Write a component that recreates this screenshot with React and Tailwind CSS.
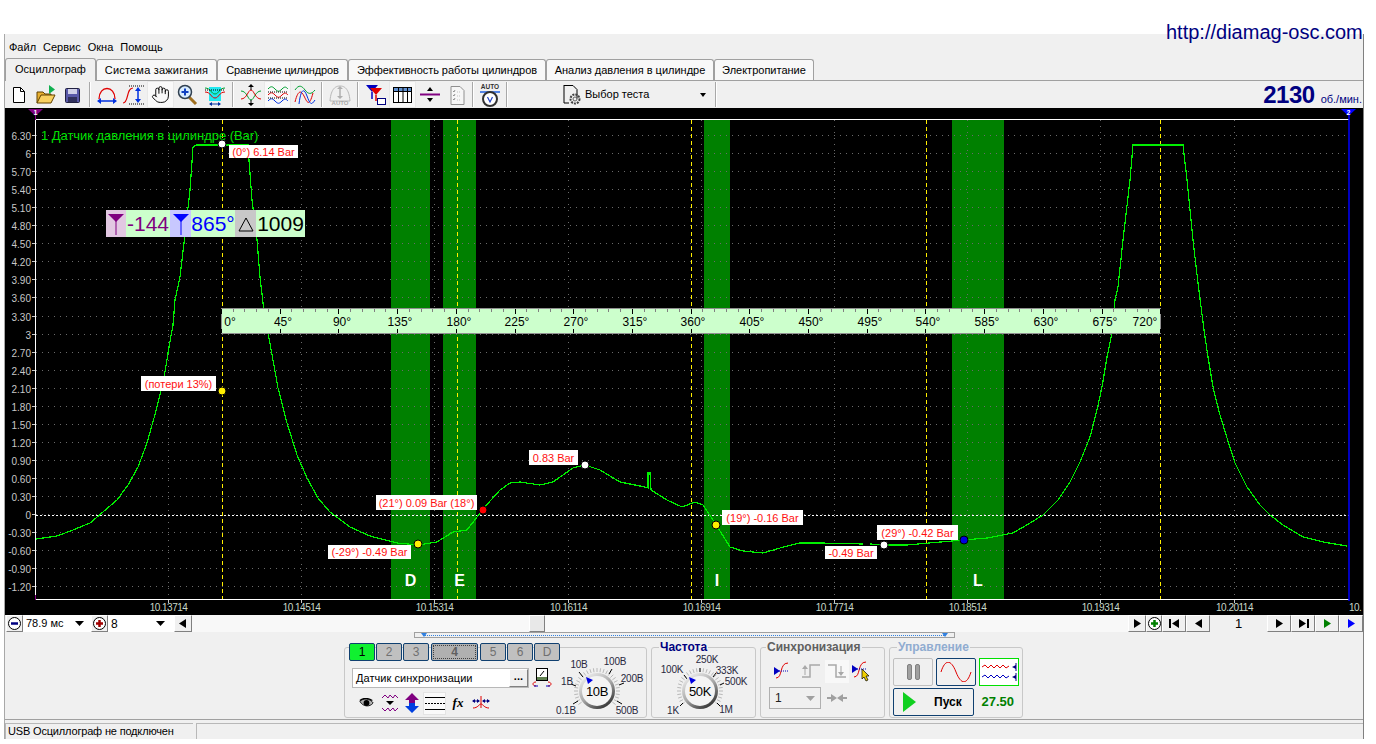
import { Hand } from 'lucide-react';

const TABS = [
  { label: 'Система зажигания', w: 'w-[121px] tracking-[0.2px]' },
  { label: 'Сравнение цилиндров', w: 'w-[131px] tracking-[-0.15px]' },
  { label: 'Эффективность работы цилиндров', w: 'w-[198px] tracking-[-0.05px]' },
  { label: 'Анализ давления в цилиндре', w: 'w-[168px]' },
  { label: 'Электропитание', w: 'w-[100px]' },
];

const Y_LABELS = ['6.30', '6', '5.70', '5.40', '5.10', '4.80', '4.50', '4.20', '3.90', '3.60', '3.30', '3', '2.70', '2.40', '2.10', '1.80', '1.50', '1.20', '0.90', '0.60', '0.30', '0', '-0.30', '-0.60', '-0.90', '-1.20'];
const TIMES = ['10.13714', '10.14514', '10.15314', '10.16114', '10.16914', '10.17714', '10.18514', '10.19314', '10.20114'];
const CURSORS = [222, 457, 691, 926, 1160];
const BANDS = [
  { x: 391, w: 39, letter: 'D' },
  { x: 443, w: 33, letter: 'E' },
  { x: 704, w: 26, letter: 'I' },
  { x: 952, w: 52, letter: 'L' },
];
const RULER = [[0, 230], [45, 283], [90, 342], [135, 400], [180, 459], [225, 517], [270, 576], [315, 635], [360, 693], [405, 752], [450, 811], [495, 870], [540, 928], [585, 987], [630, 1046], [675, 1105], [720, 1145]];
const NOTES = [
  { x: 229, y: 145, w: 69, h: 13, text: '(0°) 6.14 Bar' },
  { x: 141, y: 376, w: 75, h: 15, text: '(потери 13%)' },
  { x: 529, y: 450, w: 49, h: 15, text: '0.83 Bar' },
  { x: 376, y: 495, w: 101, h: 15, text: '(21°) 0.09 Bar (18°)' },
  { x: 328, y: 545, w: 83, h: 14, text: '(-29°) -0.49 Bar' },
  { x: 722, y: 510, w: 81, h: 15, text: '(19°) -0.16 Bar' },
  { x: 825, y: 546, w: 52, h: 13, text: '-0.49 Bar' },
  { x: 877, y: 525, w: 81, h: 15, text: '(29°) -0.42 Bar' },
];
const DOTS = [[222, 144, '#fff'], [222, 391, '#ffee00'], [418, 544, '#ffee00'], [483, 510, '#ff0000'], [585, 465, '#fff'], [716, 525, '#ffee00'], [884, 545, '#fff'], [964, 540, '#0000e0']];

const CURVE_A = '36,539 57,536 73,530 90,523 103,512 117,500 128,485 138,467 147,443 154,418 160,395 165,372 169,347 173,325 175,300 180,277 184,243 190,190 193,147 196,145 248,145 249,160 252,200 257,240 260,277 265,320 268,333 273,360 278,388 287,423 297,455 307,478 318,498 330,512 350,527 370,536 397,543 418,545 437,542 453,532 467,530 477,517 483,509 500,490 510,483 520,482 540,485 553,482 573,468 585,465 600,470 620,482 645,487 648,488 648,473 650,473 651,490 667,500 682,507 695,502 703,505 715,523 730,547 743,551 763,553 780,548 800,543 820,543 863,544';
const CURVE_B = '870,544 884,545 907,545 963,540 987,538 1013,533 1030,523 1043,515 1058,500 1070,482 1080,462 1090,437 1097,410 1102,387 1107,357 1112,333 1115,300 1118,287 1123,240 1130,180 1133,145 1183,145 1187,180 1193,240 1198,283 1204,330 1208,357 1213,387 1220,415 1227,438 1235,463 1247,487 1260,505 1270,515 1283,525 1303,537 1323,542 1347,546';

const bevel = 'border border-t-white border-l-white border-r-[#808080] border-b-[#808080]';

function NewIcon() {
  return (
    <svg width="24" height="22" viewBox="0 0 24 22">
      <path d="M6.500 3.500h7l4 4v11H6.500z" fill="#fff" stroke="#000" />
      <path d="M13.500 3.500v4h4" fill="none" stroke="#000" />
    </svg>
  );
}

function OpenIcon() {
  return (
    <svg width="24" height="22" viewBox="0 0 24 22">
      <path d="M3 19V8h6l2 2h6v2" fill="#e8b030" stroke="#604000" />
      <path d="M3 19l4-8h14l-4 8z" fill="#f8d060" stroke="#604000" />
      <path d="M15 1l6 4.500-6 4.500z" fill="#10b050" />
    </svg>
  );
}

function SaveIcon() {
  return (
    <svg width="24" height="22" viewBox="0 0 24 22">
      <rect x="4.500" y="4.500" width="14" height="14" rx="1" fill="#5858a8" stroke="#202040" />
      <rect x="7" y="5" width="9" height="5" fill="#d0d0e8" />
      <rect x="7" y="13" width="9" height="5" fill="#30305c" />
    </svg>
  );
}

function WidthIcon() {
  return (
    <svg width="24" height="22" viewBox="0 0 24 22" fill="none">
      <path d="M4 15C4 1 20 1 20 15" stroke="#e00000" strokeWidth="1.300" />
      <path d="M4 17h15" stroke="#0030e0" strokeWidth="1.500" />
      <path d="M2 17l4-3v6zM22 17l-4-3v6z" fill="#0030e0" />
    </svg>
  );
}

function HeightIcon() {
  return (
    <svg width="24" height="22" viewBox="0 0 24 22" fill="none">
      <path d="M1 19c6 0 3-15 10-15" stroke="#e00000" strokeWidth="1.200" />
      <path d="M7 2h15M7 20h15" stroke="#000" strokeDasharray="1 1" />
      <path d="M16 5v12" stroke="#0030e0" strokeWidth="1.500" />
      <path d="M16 3l-3 4h6zM16 19l-3-4h6z" fill="#0030e0" />
    </svg>
  );
}

function ZoomIcon() {
  return (
    <svg width="24" height="22" viewBox="0 0 24 22" fill="none">
      <path d="M13 13l7 7" stroke="#a07020" strokeWidth="3" />
      <circle cx="9" cy="8" r="6.500" fill="#d8ecff" stroke="#304050" strokeWidth="1.500" />
      <path d="M5.500 8h7M9 4.500v7" stroke="#1040c0" strokeWidth="2" />
    </svg>
  );
}

function SpanIcon() {
  return (
    <svg width="24" height="22" viewBox="0 0 24 22" fill="none">
      <path d="M6 3h12v14H6z" fill="#20e8f0" />
      <path d="M2 4c6 0 6 6 10 6s4-6 10-6" stroke="#00a030" />
      <path d="M2 8c6 0 6 6 10 6s4-6 10-6" stroke="#e00000" />
      <path d="M2 6h20" stroke="#000" strokeDasharray="1 1" />
      <path d="M7 20h10" stroke="#0030a0" />
      <path d="M6 20l3-2v4zM18 20l-3-2v4z" fill="#0030a0" />
    </svg>
  );
}

function CrossIcon() {
  return (
    <svg width="24" height="22" viewBox="0 0 24 22" fill="none">
      <path d="M2 7c6 0 7 9 10 9s4-9 10-9" stroke="#00a030" />
      <path d="M2 15c6 0 7-9 10-9s4 9 10 9" stroke="#e00000" />
      <path d="M12 0l-3 3h6zM12 22l-3-3h6z" fill="#000" />
      <path d="M12 3v3M12 16v3" stroke="#000" />
    </svg>
  );
}

function WavesIcon() {
  return (
    <svg width="24" height="22" viewBox="0 0 24 22" fill="none">
      <path d="M2 5c3-3 4-3 7 0s4 3 7 0 4-2 6 0" stroke="#00a030" />
      <path d="M2 11c3-3 4-3 7 0s4 3 7 0 4-2 6 0" stroke="#e00000" />
      <path d="M2 17c3-3 4-3 7 0s4 3 7 0 4-2 6 0" stroke="#0030e0" />
      <path d="M2 8h20M2 14h20" stroke="#000" strokeDasharray="1 1" />
    </svg>
  );
}

function OverlapIcon() {
  return (
    <svg width="24" height="22" viewBox="0 0 24 22" fill="none">
      <path d="M2 6c4-6 7-4 10 0s6 5 10 0" stroke="#00a030" />
      <path d="M2 18C5 6 8 6 11 12s5 12 9-3" stroke="#e00000" />
      <path d="M6 20C8 4 11 4 14 12s4 10 8 4" stroke="#0030e0" />
    </svg>
  );
}

function AutoOffIcon() {
  return (
    <svg width="24" height="22" viewBox="0 0 24 22" fill="none">
      <path d="M2 17C3 4 8 2 12 2s9 2 10 15z" stroke="#b8b8b8" />
      <path d="M12 4v9" stroke="#b0b0b0" strokeWidth="1.500" />
      <path d="M12 2l-3 3h6zM12 15l-3-3h6z" fill="#b0b0b0" />
      <text x="12" y="21" textAnchor="middle" fontSize="6" fontWeight="700" fill="#a8a8a8">AUTO</text>
    </svg>
  );
}

function FilterIcon() {
  return (
    <svg width="24" height="22" viewBox="0 0 24 22">
      <path d="M2 1h12L8 8z" fill="#0000c0" />
      <path d="M8 8v7" stroke="#0000c0" strokeWidth="1.500" />
      <path d="M6 4h12l-6 7z" fill="#e00000" />
      <path d="M12 11v6" stroke="#e00000" strokeWidth="1.500" />
      <rect x="13.500" y="14.500" width="8" height="6" fill="#fff" stroke="#000080" />
    </svg>
  );
}

function TableIcon() {
  return (
    <svg width="24" height="22" viewBox="0 0 24 22" fill="none">
      <rect x="2.500" y="3.500" width="18" height="15" stroke="#000" fill="#fff" />
      <rect x="2.500" y="3.500" width="18" height="4" fill="#6090d0" stroke="#000" />
      <path d="M7.500 4v14M12 4v14M16.500 4v14" stroke="#000" />
    </svg>
  );
}

function DividerIcon() {
  return (
    <svg width="24" height="22" viewBox="0 0 24 22">
      <path d="M2 10.500h20" stroke="#800080" strokeWidth="2" />
      <path d="M12 3l-3 4h6zM12 18l-3-4h6z" fill="#000" />
    </svg>
  );
}

function ChecklistIcon() {
  return (
    <svg width="24" height="22" viewBox="0 0 24 22" fill="none">
      <path d="M6 2.500h9l4 4v14H6z" fill="#f6f6f6" stroke="#909090" />
      <path d="M8 7l1 1 1-2M8 11l1 1 1-2M8 15l1 1 1-2" stroke="#909090" />
      <path d="M12 8h4M12 12h4M12 16h4" stroke="#c0c0c0" strokeDasharray="1 1" />
    </svg>
  );
}

function GaugeIcon() {
  return (
    <svg width="24" height="24" viewBox="0 0 24 24" fill="none">
      <text x="12" y="6" textAnchor="middle" fontSize="6.500" fontWeight="700" fill="#303030">AUTO</text>
      <path d="M2 9h20" stroke="#2060e0" strokeWidth="1.500" />
      <circle cx="12" cy="16" r="7" fill="#fff" stroke="#303030" strokeWidth="2" />
      <path d="M9.500 14l2.500 5 2.500-5" stroke="#2040c0" strokeWidth="1.200" />
    </svg>
  );
}

function Tool({ children, pressed }) {
  return (
    <div className={`w-[27px] h-[27px] flex items-center justify-center ${pressed ? 'bg-[#f9f9f9] border border-[#e8e8e8]' : ''}`}>
      {children}
    </div>
  );
}

function Sep({ className }) {
  return (
    <div className={`h-[25px] flex justify-center ${className}`}>
      <div className="w-[2px] h-full border-l border-l-[#a8a8a8] border-r border-r-white" />
    </div>
  );
}

function Chart() {
  return (
    <div className="relative h-[507px] bg-black overflow-hidden">
      <svg width="1358" height="507" viewBox="5 108 1358 507" className="block">
        {BANDS.map((b) => (
          <rect key={b.letter} x={b.x} y="120" width={b.w} height="479" fill="#008000" />
        ))}

        {Y_LABELS.map((lbl, i) => {
          const y = Math.round(135 + i * 18.05) + 0.5;
          return (
            <g key={lbl}>
              <line x1="36" x2="1349" y1={y} y2={y} stroke="#6a6a6a" strokeDasharray="1 5" />
              <line x1="32" x2="35" y1={y} y2={y} stroke="#c8c8c8" />
              <text x="31" y={y + 4} textAnchor="end" fontSize="10" fill="#c8c8c8">{lbl}</text>
            </g>
          );
        })}

        {TIMES.map((t, i) => {
          const x = Math.round(168 + i * 133.2) + 0.5;
          return (
            <g key={t}>
              <line x1={x} x2={x} y1="120" y2="599" stroke="#6a6a6a" strokeDasharray="1 5" />
              <line x1={x} x2={x} y1="599" y2="603" stroke="#c8c8c8" />
              <text x={x} y="611" textAnchor="middle" fontSize="10" letterSpacing="-0.500" fill="#c8d8c8">{t}</text>
            </g>
          );
        })}
        <text x="1349" y="611" fontSize="10" letterSpacing="-0.500" fill="#c8d8c8">10.</text>

        {CURSORS.map((x) => (
          <line key={x} x1={x + 0.5} x2={x + 0.5} y1="120" y2="599" stroke="#ffee00" strokeDasharray="4 3" />
        ))}
        <line x1="36" x2="1349" y1="515.500" y2="515.500" stroke="#fff" strokeDasharray="2 2" />

        <polyline points={CURVE_A} fill="none" stroke="#00f000" strokeWidth="1.200" shapeRendering="crispEdges" />
        <polyline points={CURVE_B} fill="none" stroke="#00f000" strokeWidth="1.200" shapeRendering="crispEdges" />

        <path d="M35.500 119V599.500H1349" fill="none" stroke="#fff" />
        <path d="M35 119.500H1349" stroke="#fff" />
        <line x1="35.500" x2="35.500" y1="114" y2="120" stroke="#800080" />
        <line x1="35.500" x2="35.500" y1="595" y2="600" stroke="#800080" />
        <line x1="1349" x2="1349" y1="114" y2="601" stroke="#0000ff" strokeWidth="1.500" />
        <path d="M28 109h15l-7.500 7z" fill="#800080" />
        <text x="35.500" y="115" textAnchor="middle" fontSize="7" fontWeight="700" fill="#fff">1</text>
        <path d="M1341 109h15l-7.500 7z" fill="#0000ff" />
        <text x="1348.500" y="115" textAnchor="middle" fontSize="7" fontWeight="700" fill="#fff">2</text>

        <text x="41" y="140" fontSize="13" letterSpacing="-0.050" fill="#00e000">1 Датчик давления в цилиндре (Bar)</text>

        {BANDS.map((b) => (
          <text key={b.letter} x={b.x + b.w / 2} y="586" textAnchor="middle" fontSize="16" fontWeight="700" fill="#fff">{b.letter}</text>
        ))}

        <rect x="221.500" y="308.500" width="939" height="25" fill="#ccffcc" stroke="#909090" />
        {Array.from({ length: 81 }, (_, i) => {
          const x = Math.round(221 + i * 11.74) + 0.5;
          const major = i % 5 === 0;
          return (
            <g key={i}>
              <line x1={x} x2={x} y1="309" y2={major ? 314 : 312} stroke={major ? '#000' : '#808080'} />
              {major && <line x1={x} x2={x} y1="329" y2="333" stroke="#000" />}
            </g>
          );
        })}
        {RULER.map(([deg, x]) => (
          <text key={deg} x={x} y="326" textAnchor="middle" fontSize="12" fill="#000">{deg}°</text>
        ))}

        {NOTES.map((n) => (
          <g key={n.text}>
            <rect x={n.x} y={n.y} width={n.w} height={n.h} fill="#fff" />
            <text x={n.x + n.w / 2} y={n.y + n.h / 2 + 4} textAnchor="middle" fontSize="11" fill="#ff1010">{n.text}</text>
          </g>
        ))}
        {DOTS.map(([x, y, c]) => (
          <circle key={`${x}-${y}`} cx={x} cy={y} r="4" fill={c} stroke="#000" />
        ))}
      </svg>

      {/* cursor readout */}
      <div className="absolute left-[101px] top-[102px] flex h-[27px] text-[21px] leading-[27px]">
        <div className="w-[20px] bg-[#e2c8e2] flex items-center justify-center">
          <svg width="16" height="23" viewBox="0 0 16 23"><path d="M0 2h16L8 10z" fill="#800080" /><path d="M8 8v15" stroke="#800080" /></svg>
        </div>
        <div className="w-[44px] bg-[#ccffcc] text-[#800080] text-center">-144</div>
        <div className="w-[21px] bg-[#c8c8ff] flex items-center justify-center">
          <svg width="16" height="23" viewBox="0 0 16 23"><path d="M0 2h16L8 10z" fill="#0000ff" /><path d="M8 8v15" stroke="#0000ff" /></svg>
        </div>
        <div className="w-[44px] bg-[#ccffcc] text-[#0000ff] text-center">865°</div>
        <div className="w-[21px] bg-[#c8c8c8] flex items-center justify-center">
          <svg width="16" height="16" viewBox="0 0 16 16"><path d="M8 2l7 13H1z" fill="none" stroke="#000" /></svg>
        </div>
        <div className="w-[49px] bg-[#ccffcc] text-black text-center">1009</div>
      </div>
    </div>
  );
}

function NavBtn({ children, className = 'w-[24px]' }) {
  return (
    <div className={`h-[17px] bg-[#f0f0f0] flex items-center justify-center ${bevel} ${className}`}>
      {children}
    </div>
  );
}

function Tri({ dir = 'r', color = '#000' }) {
  return (
    <svg width="9" height="9" viewBox="0 0 9 9">
      <path d={dir === 'r' ? 'M1 0l7 4.500-7 4.500z' : 'M8 0L1 4.500 8 9z'} fill={color} />
    </svg>
  );
}

function RoundBtn({ minus }) {
  const color = minus ? '#000080' : '#a00000';
  return (
    <div className={`w-[17px] h-[17px] flex items-center justify-center bg-[#f0f0f0] ${bevel}`}>
      <svg width="13" height="13" viewBox="0 0 13 13">
        <circle cx="6.500" cy="6.500" r="6" fill="#fff" stroke="#000" />
        <path d={minus ? 'M3 6.500h7' : 'M3 6.500h7M6.500 3v7'} stroke={color} strokeWidth="2.500" />
      </svg>
    </div>
  );
}

function DropArrow() {
  return (
    <svg width="9" height="5" viewBox="0 0 9 5"><path d="M0 0h9L4.500 5z" fill="#000" /></svg>
  );
}

function ScrollRow() {
  return (
    <div className="h-[17px] flex items-stretch pl-px text-[11px]">
      <RoundBtn minus />
      <div className="w-[68px] bg-white flex items-center justify-between pl-[3px] pr-[7px]">
        <span>78.9 мс</span>
        <DropArrow />
      </div>
      <RoundBtn />
      <div className="w-[66px] bg-white flex items-center justify-between pl-[3px] pr-[9px]">
        <span className="text-[12px]">8</span>
        <DropArrow />
      </div>
      <NavBtn className="w-[18px]"><Tri dir="l" /></NavBtn>
      <div className="w-[938px] bg-[#f8f8f8] relative">
        <div className={`absolute left-[337px] top-0 w-[16px] h-[17px] bg-[#e8e8e8] ${bevel}`} />
      </div>
      <NavBtn className="w-[18px]"><Tri /></NavBtn>
      <div className={`w-[16px] h-[17px] flex items-center justify-center bg-[#f0f0f0] ${bevel}`}>
        <svg width="13" height="13" viewBox="0 0 13 13">
          <circle cx="6.500" cy="6.500" r="6" fill="#fff" stroke="#000" />
          <path d="M3 6.500h7M6.500 3v7" stroke="#008000" strokeWidth="2.500" />
        </svg>
      </div>
      <NavBtn>
        <svg width="11" height="9" viewBox="0 0 11 9"><path d="M0 0h2v9H0zM10 0L3 4.500 10 9z" fill="#000" /></svg>
      </NavBtn>
      <NavBtn><Tri dir="l" /></NavBtn>
      <div className="w-[57px] bg-[#f0f0f0] text-center leading-[17px] text-[13px]">1</div>
      <NavBtn><Tri /></NavBtn>
      <NavBtn>
        <svg width="11" height="9" viewBox="0 0 11 9"><path d="M1 0l7 4.500L1 9zM9 0h2v9H9z" fill="#000" /></svg>
      </NavBtn>
      <NavBtn><Tri color="#008000" /></NavBtn>
      <NavBtn><Tri color="#0000ff" /></NavBtn>
    </div>
  );
}

function Dial({ value, cx, cy, labels, marks, pointer }) {
  return (
    <svg width="104" height="70" viewBox="0 0 104 70" className="block">
      <defs>
        <linearGradient id={`ring${value}`} x1="0.150" y1="0" x2="0.850" y2="1">
          <stop offset="0" stopColor="#f4f4f4" />
          <stop offset="0.500" stopColor="#a8a8a8" />
          <stop offset="1" stopColor="#202020" />
        </linearGradient>
      </defs>
      {Array.from({ length: 40 }, (_, i) => {
        const a = (i * 9 * Math.PI) / 180;
        if (Math.sin(a) < -0.7) return null;
        return (
          <line key={i} x1={cx + Math.cos(a) * 19} y1={cy - Math.sin(a) * 19} x2={cx + Math.cos(a) * 23} y2={cy - Math.sin(a) * 23} stroke="#b8b8b8" />
        );
      })}
      {marks.map(([x1, y1, x2, y2], i) => (
        <line key={i} x1={x1} y1={y1} x2={x2} y2={y2} stroke="#000" />
      ))}
      <circle cx={cx} cy={cy} r="18" fill={`url(#ring${value})`} />
      <circle cx={cx} cy={cy} r="15" fill="#f4f4f4" />
      <path d={pointer} fill="#0000e0" />
      <text x={cx} y={cy + 5} textAnchor="middle" fontSize="13" letterSpacing="-0.300" fill="#000">{value}</text>
      {labels.map(([t, x, y]) => (
        <text key={t} x={x} y={y} textAnchor="middle" fontSize="10" letterSpacing="-0.200" fill="#282840">{t}</text>
      ))}
    </svg>
  );
}

function ChannelBtn({ children, active, wide }) {
  return (
    <div className={`h-[18px] border border-[#104070] rounded-[2px] flex items-center justify-center text-[12px] ${wide ? 'w-[47px] bg-[#b0b0b0] font-bold text-[#606060] mx-[1px]' : 'w-[26px]'} ${active ? 'bg-[#10f030] text-black' : ''} ${!active && !wide ? 'bg-[#c0c0c0] text-[#707070]' : ''}`}>
      {wide ? <div className="w-[43px] h-[14px] border border-dotted border-[#404040] text-center leading-[12px]">{children}</div> : children}
    </div>
  );
}

function ChannelGroup() {
  return (
    <div className="relative w-[303px] h-[71px] mt-[15px] border border-[#c8c8c8] rounded-[3px]">
      <div className="absolute left-[4px] -top-[5px] flex gap-px">
        <ChannelBtn active>1</ChannelBtn>
        <ChannelBtn>2</ChannelBtn>
        <ChannelBtn>3</ChannelBtn>
        <ChannelBtn wide>4</ChannelBtn>
        <ChannelBtn>5</ChannelBtn>
        <ChannelBtn>6</ChannelBtn>
        <ChannelBtn>D</ChannelBtn>
      </div>
      <div className="flex items-start">
        <div className="pl-[7px] pt-[20px]">
          <div className="flex items-center gap-[3px]">
            <div className="w-[177px] h-[20px] bg-white border border-[#b8b8b8] flex items-center justify-between pl-[3px] text-[11px] tracking-[0.05px]">
              <span>Датчик синхронизации</span>
              <div className={`w-[19px] h-[18px] bg-[#f0f0f0] text-center leading-[12px] font-bold text-[11px] ${bevel}`}>...</div>
            </div>
            <svg width="20" height="20" viewBox="0 0 20 20" fill="none">
              <rect x="4.500" y="0.500" width="11" height="12" fill="#fff" stroke="#000" />
              <rect x="5" y="9" width="10" height="3" fill="#608050" />
              <path d="M8 8l4-5" stroke="#000" />
              <path d="M4 14c-4 0-4 4 0 4M16 14c4 0 4 4 0 4" stroke="#e00000" />
              <path d="M2 18h4M14 18h4" stroke="#0000c0" />
            </svg>
          </div>
          <div className="flex items-center mt-[3px] pl-[3px] h-[24px]">
            <div className="w-[23px] flex justify-center">
              <svg width="15" height="10" viewBox="0 0 18 12"><path d="M1 4c4-4 12-4 16 2-4 5-12 5-16-2z" fill="#b0b0b0" stroke="#000" /><circle cx="9" cy="6" r="3.500" fill="#000" /><path d="M1 3c4-3 10-3 15 0" stroke="#000" strokeWidth="1.500" fill="none" /></svg>
            </div>
            <div className="w-[23px] flex justify-center">
              <svg width="18" height="20" viewBox="0 0 18 20" fill="none"><path d="M1 5l3-3 3 3 2-3 3 3 2-3 3 3" stroke="#800080" /><path d="M1 15l3 3 3-3 2 3 3-3 2 3 3-3" stroke="#800080" /><path d="M5 8h8l-4 4z" fill="#000" /></svg>
            </div>
            <div className="w-[22px] flex justify-center">
              <svg width="16" height="20" viewBox="0 0 16 20"><path d="M8 0l7 7h-4v3H5V7H1z" fill="#800080" /><path d="M8 20l7-7h-4v-3H5v3H1z" fill="#0040e0" /></svg>
            </div>
            <div className="w-[23px] h-[23px] bg-[#fafafa] border border-[#e4e4e4] flex items-center justify-center">
              <svg width="20" height="17" viewBox="0 0 20 17"><path d="M0 2.500h20M0 14.500h20" stroke="#000" /><path d="M0 8.500h20" stroke="#000" strokeDasharray="2 1" /></svg>
            </div>
            <div className="w-[24px] text-center italic font-bold text-[13px] [font-family:'Liberation_Serif',serif]">fx</div>
            <div className="w-[22px] flex justify-center">
              <svg width="18" height="14" viewBox="0 0 18 14" fill="none"><path d="M9 0v12" stroke="#e00000" /><path d="M1 12c5 0 6-4 8-4s3 4 8 4" stroke="#e00000" /><path d="M1 5h6M11 5h6" stroke="#000080" /><path d="M0 5l3-2v4zM8 5L5 3v4zM10 5l3-2v4zM18 5l-3-2v4z" fill="#000080" /></svg>
            </div>
          </div>
        </div>
        <div className="-ml-[6px]">
          <Dial
            value="10В"
            cx={51}
            cy={43}
            pointer="M40 29l7 3-5 4z"
            marks={[[33, 24, 37, 29], [66, 21, 63, 26], [25, 36, 30, 38], [78, 35, 73, 37], [27, 56, 32, 53], [76, 56, 71, 53]]}
            labels={[['10В', 33, 20], ['100В', 69, 17], ['1В', 21, 37], ['200В', 86, 34], ['0.1В', 20, 66], ['500В', 81, 66]]}
          />
        </div>
      </div>
    </div>
  );
}

function FreqGroup() {
  return (
    <div className="relative w-[105px] h-[71px] mt-[15px] ml-[4px] border border-[#c8c8c8] rounded-[3px]">
      <div className="absolute left-[7px] -top-[8px] px-px bg-[#f0f0f0] text-[12px] font-bold text-[#000080] leading-[14px]">Частота</div>
      <Dial
        value="50K"
        cx={48}
        cy={43}
        pointer="M37 29l7 3-5 4z"
        marks={[[48, 20, 48, 24], [64, 25, 61, 29], [72, 35, 68, 37], [68, 58, 65, 55], [28, 58, 31, 55], [32, 27, 35, 31]]}
        labels={[['100K', 20, 25], ['250K', 55, 15], ['333K', 75, 26], ['500K', 84, 37], ['1K', 21, 66], ['1M', 74, 65]]}
      />
    </div>
  );
}

function SyncGroup() {
  return (
    <div className="relative w-[125px] h-[71px] mt-[15px] ml-[4px] border border-[#c8c8c8] rounded-[3px]">
      <div className="absolute left-[5px] -top-[8px] px-px bg-[#f0f0f0] text-[12px] font-bold text-[#606060] leading-[14px]">Синхронизация</div>
      <div className="flex items-center pl-[8px] pt-[11px] h-[35px]">
        <div className="w-[28px] flex justify-center">
          <svg width="20" height="20" viewBox="0 0 20 20" fill="none"><path d="M3 17c7 0 3-15 12-15" stroke="#e00000" /><path d="M4 10h12" stroke="#0000c0" strokeDasharray="1 1" /><path d="M1 6l6 4-6 4z" fill="#0000c0" /></svg>
        </div>
        <div className="w-[28px] flex justify-center">
          <svg width="20" height="16" viewBox="0 0 20 16" fill="none"><path d="M1 14h8V2h10" stroke="#a8a8a8" strokeWidth="1.500" /><path d="M4 6v6" stroke="#a8a8a8" /><path d="M4 2l-3 4h6z" fill="#a8a8a8" /></svg>
        </div>
        <div className="w-[24px] h-[23px] bg-[#f8f8f8] flex justify-center items-center">
          <svg width="20" height="16" viewBox="0 0 20 16" fill="none"><path d="M1 2h8v12h10" stroke="#a8a8a8" strokeWidth="1.500" /><path d="M14 3v6" stroke="#a8a8a8" /><path d="M14 13l-3-4h6z" fill="#a8a8a8" /></svg>
        </div>
        <div className="w-[26px] flex justify-center">
          <svg width="22" height="22" viewBox="0 0 22 22" fill="none"><path d="M3 17c7 0 3-15 12-15" stroke="#e00000" /><path d="M4 9h11" stroke="#0000c0" strokeDasharray="1 1" /><path d="M1 5l6 4-6 4z" fill="#0000c0" /><path d="M11 9l7 7-3 0 2 4-2 1-2-4-2 2z" fill="#f0d000" stroke="#000" strokeWidth="0.700" /></svg>
        </div>
      </div>
      <div className="flex items-center pl-[8px] mt-[4px]">
        <div className="w-[52px] h-[22px] border border-[#b0b0b0] flex items-center justify-between px-[5px] text-[12px]">
          <span className="text-[#202020]">1</span>
          <svg width="9" height="5" viewBox="0 0 9 5"><path d="M0 0h9L4.500 5z" fill="#a0a0a0" /></svg>
        </div>
        <svg width="20" height="10" viewBox="0 0 20 10" className="ml-[6px]"><path d="M0 5h6M14 5h6" stroke="#a0a0a0" strokeWidth="2" /><path d="M10 5L4 1v8zM10 5l6-4v8z" fill="#a0a0a0" /></svg>
      </div>
    </div>
  );
}

function ControlGroup() {
  return (
    <div className="relative w-[134px] h-[71px] mt-[15px] ml-[4px] border border-[#c8c8c8] rounded-[3px]">
      <div className="absolute left-[7px] -top-[8px] px-px bg-[#f0f0f0] text-[12px] font-bold text-[#90acd0] leading-[14px]">Управление</div>
      <div className="flex gap-[3px] pl-[3px] pt-[10px]">
        <div className="w-[40px] h-[28px] border border-[#c0c0c0] rounded-[2px] bg-[#f0f0f0] flex items-center justify-center gap-[3px]">
          <div className="w-[5px] h-[16px] bg-[#a0a0a0] rounded-[2px] border border-[#808080]" />
          <div className="w-[5px] h-[16px] bg-[#a0a0a0] rounded-[2px] border border-[#808080]" />
        </div>
        <div className="w-[40px] h-[28px] border border-[#104070] rounded-[2px] bg-[#f0f0f0] flex items-center justify-center">
          <svg width="32" height="20" viewBox="0 0 32 20" fill="none"><path d="M1 10C5 -3 11 -3 16 10s11 13 15 0" stroke="#e00000" /></svg>
        </div>
        <div className="w-[40px] h-[28px] border border-[#00e000] bg-white flex items-center justify-center">
          <svg width="36" height="24" viewBox="0 0 36 24" fill="none"><path d="M1 7l3-2 3 3 3-3 3 3 3-3 3 3 3-3 3 3 3-2" stroke="#e00000" /><path d="M1 17l3-2 3 3 3-3 3 3 3-3 3 3 3-3 3 3 3-2" stroke="#0000c0" /><path d="M35 3v8M35 13v8" stroke="#000080" /><path d="M31 7l4-2v4zM31 17l4-2v4z" fill="#000080" /></svg>
        </div>
      </div>
      <div className="flex items-center pl-[3px] mt-[2px]">
        <div className="w-[83px] h-[28px] border border-[#104070] rounded-[2px] bg-[#f0f0f0] flex items-center pl-[9px]">
          <svg width="13" height="20" viewBox="0 0 13 20"><path d="M0 0l13 10L0 20z" fill="#10d020" /></svg>
          <span className="ml-[18px] text-[12px] font-bold">Пуск</span>
        </div>
        <div className="w-[50px] text-center text-[13px] font-bold text-[#008000]">27.50</div>
      </div>
    </div>
  );
}

function App() {
  return (
    <div className="relative w-[1376px] h-[744px] bg-white overflow-hidden text-black text-[11px] [font-family:'Liberation_Sans',sans-serif]">
      <div className="h-[34px]" />
      <div className="absolute left-[1166px] top-[21px] text-[20px] leading-[22px] text-[#000080]">http://diamag-osc.com</div>

      <div className="ml-[4px] w-[1360px] h-[705px] bg-[#f0f0f0] border-l border-l-[#a8a8a8] border-r border-r-[#808080]">
        {/* Menu */}
        <div className="h-[24px] flex items-center gap-[7px] pl-[4px] pt-[2px]">
          <span>Файл</span>
          <span>Сервис</span>
          <span>Окна</span>
          <span>Помощь</span>
        </div>

        {/* Tabs */}
        <div className="h-[22px] flex items-end">
          <div className="w-[91px] h-[23px] -mb-px z-10 relative bg-[#f0f0f0] border border-[#a0a0a0] border-b-0 rounded-t-[3px] text-center leading-[21px]">Осциллограф</div>
          {TABS.map((t) => (
            <div key={t.label} className={`${t.w} h-[21px] bg-[#f8f8f8] border border-[#a0a0a0] border-b-0 rounded-t-[3px] text-center leading-[20px]`}>{t.label}</div>
          ))}
        </div>

        {/* Toolbar */}
        <div className="h-[28px] border-t border-t-[#a0a0a0] flex items-center">
          <Tool><NewIcon /></Tool>
          <Tool><OpenIcon /></Tool>
          <Tool><SaveIcon /></Tool>
          <Sep className="w-[7px]" />
          <Tool><WidthIcon /></Tool>
          <Tool><HeightIcon /></Tool>
          <Tool pressed><Hand size={19} strokeWidth={1.2} color="#000" /></Tool>
          <Tool><ZoomIcon /></Tool>
          <Tool><SpanIcon /></Tool>
          <Sep className="w-[9px]" />
          <Tool><CrossIcon /></Tool>
          <Tool pressed><WavesIcon /></Tool>
          <Tool><OverlapIcon /></Tool>
          <Sep className="w-[8px]" />
          <Tool><AutoOffIcon /></Tool>
          <Sep className="w-[9px]" />
          <Tool><FilterIcon /></Tool>
          <Tool pressed><TableIcon /></Tool>
          <Tool><DividerIcon /></Tool>
          <Tool><ChecklistIcon /></Tool>
          <Sep className="w-[6px]" />
          <Tool><GaugeIcon /></Tool>
          <Sep className="w-[7px]" />
          <div className="w-[51px]" />
          <div className="w-[153px] flex items-center">
            <svg width="22" height="22" viewBox="0 0 22 22" fill="none">
              <path d="M3 1.500h9l4 4v9" stroke="#000" />
              <path d="M3 1v18h5" stroke="#000" />
              <circle cx="14" cy="15" r="4.500" stroke="#404040" strokeWidth="2" strokeDasharray="2 1" />
              <circle cx="14" cy="15" r="2" stroke="#606060" />
            </svg>
            <span className="ml-[2px] flex-1">Выбор теста</span>
            <svg width="6" height="4" viewBox="0 0 6 4"><path d="M0 0h6L3 4z" fill="#000" /></svg>
            <div className="w-[8px]" />
          </div>
          <Sep className="w-[4px]" />
          <div className="flex-1 flex items-baseline justify-end pr-[1px] text-[#000080]">
            <span className="text-[24px] tracking-[-0.5px] font-bold leading-[27px]">2130</span>
            <span className="ml-[6px] text-[11px]">об./мин.</span>
          </div>
        </div>

        <Chart />
        <ScrollRow />

        {/* Bottom panel */}
        <div className="relative h-[88px] border-b border-b-[#a0a0a0] flex pl-[339px]">
          <div className="absolute left-[409px] top-0 w-[541px] h-[6px] border border-[#a0a0a0] flex items-center justify-between px-[6px]">
            <div className="absolute left-[8px] right-[8px] top-[1.500px] border-t border-dotted border-t-[#3080e0]" />
            <svg width="6" height="4" viewBox="0 0 6 4" className="relative"><path d="M0 0h6L3 4z" fill="#3080e0" /></svg>
            <svg width="6" height="4" viewBox="0 0 6 4" className="relative"><path d="M0 0h6L3 4z" fill="#3080e0" /></svg>
          </div>
          <ChannelGroup />
          <FreqGroup />
          <SyncGroup />
          <ControlGroup />
        </div>

        {/* Status bar */}
        <div className="h-[19px] pt-[3px] flex">
          <div className="w-[188px] h-[16px] border-l border-t border-[#b8b8b8] pl-[2px] leading-[15px] whitespace-nowrap tracking-[-0.17px]">USB Осциллограф не подключен</div>
          <div className="ml-[3px] flex-1 h-[16px] border-l border-t border-[#b8b8b8]" />
        </div>
      </div>
    </div>
  );
}

export default App;
